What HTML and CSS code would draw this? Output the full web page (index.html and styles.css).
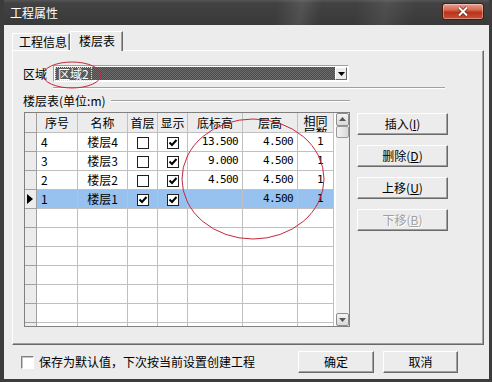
FILE: index.html
```html
<!DOCTYPE html>
<html lang="zh-CN">
<head>
  <meta charset="UTF-8">
  <title>工程属性</title>
  <link rel="stylesheet" href="styles.css">
</head>
<body>

  <div class="window">
    <!-- TITLE BAR -->
    <div class="titlebar">
      <span class="title">工程属性</span>
      <div class="close-btn">
        <svg width="14" height="11" viewBox="0 0 14 11">
          <path d="M3 1.5 L11 9.5 M11 1.5 L3 9.5" stroke="#6a2012" stroke-width="3.4" fill="none"/>
          <path d="M3 1.5 L11 9.5 M11 1.5 L3 9.5" stroke="#fff" stroke-width="2" fill="none"/>
        </svg>
      </div>
    </div>

    <div class="client">
      <!-- TABS -->
      <div class="tabs">
        <div class="tab">工程信息</div>
        <div class="tab active">楼层表</div>
      </div>

      <div class="panel">
        <div class="region-row">
          <span class="region-label">区域</span>
          <div class="combo">
            <div class="combo-value"><span class="combo-text">区域2</span></div>
            <div class="combo-btn">
              <svg width="7" height="4" viewBox="0 0 7 4"><path d="M0 0 H7 L3.5 4 Z" fill="#000"/></svg>
            </div>
          </div>
        </div>
        <div class="etched region-line"></div>

        <div class="group-title">
          <span>楼层表(单位:m)</span>
          <div class="etched group-line"></div>
        </div>

        <div class="grid-area">
          <div class="grid">
            <table class="floor-table">
              <tr class="head">
                <th class="rowhead"></th>
                <th class="c-no">序号</th>
                <th class="c-name">名称</th>
                <th class="c-chk">首层</th>
                <th class="c-chk">显示</th>
                <th class="c-num">底标高</th>
                <th class="c-num">层高</th>
                <th class="c-same"><div class="wrap-head">相同层数</div></th>
              </tr>
              <tr>
                <td class="rowhead"></td>
                <td class="left">4</td>
                <td class="center">楼层4</td>
                <td class="center"><span class="cb"></span></td>
                <td class="center"><span class="cb checked"></span></td>
                <td class="num">13.500</td>
                <td class="num">4.500</td>
                <td class="num same">1</td>
              </tr>
              <tr>
                <td class="rowhead"></td>
                <td class="left">3</td>
                <td class="center">楼层3</td>
                <td class="center"><span class="cb"></span></td>
                <td class="center"><span class="cb checked"></span></td>
                <td class="num">9.000</td>
                <td class="num">4.500</td>
                <td class="num same">1</td>
              </tr>
              <tr>
                <td class="rowhead"></td>
                <td class="left">2</td>
                <td class="center">楼层2</td>
                <td class="center"><span class="cb"></span></td>
                <td class="center"><span class="cb checked"></span></td>
                <td class="num">4.500</td>
                <td class="num">4.500</td>
                <td class="num same">1</td>
              </tr>
              <tr class="selected">
                <td class="rowhead">
                  <svg width="6" height="10" viewBox="0 0 6 10"><path d="M0 0 L6 5 L0 10 Z" fill="#000"/></svg>
                </td>
                <td class="left">1</td>
                <td class="center">楼层1</td>
                <td class="center"><span class="cb checked"></span></td>
                <td class="center"><span class="cb checked"></span></td>
                <td class="num"></td>
                <td class="num">4.500</td>
                <td class="num same">1</td>
              </tr>
              <tr class="empty"><td class="rowhead"></td><td></td><td></td><td></td><td></td><td></td><td></td><td></td></tr>
              <tr class="empty"><td class="rowhead"></td><td></td><td></td><td></td><td></td><td></td><td></td><td></td></tr>
              <tr class="empty"><td class="rowhead"></td><td></td><td></td><td></td><td></td><td></td><td></td><td></td></tr>
              <tr class="empty"><td class="rowhead"></td><td></td><td></td><td></td><td></td><td></td><td></td><td></td></tr>
              <tr class="empty"><td class="rowhead"></td><td></td><td></td><td></td><td></td><td></td><td></td><td></td></tr>
              <tr class="empty"><td class="rowhead"></td><td></td><td></td><td></td><td></td><td></td><td></td><td></td></tr>
              <tr class="empty"><td class="rowhead"></td><td></td><td></td><td></td><td></td><td></td><td></td><td></td></tr>
            </table>
            <div class="gap"></div>
            <div class="vscroll">
              <div class="sb-btn">
                <svg width="7" height="5" viewBox="0 0 7 5"><path d="M0 4 L3.5 0 L7 4 Z" fill="#555"/></svg>
              </div>
              <div class="sb-thumb"></div>
              <div class="sb-track"></div>
              <div class="sb-btn">
                <svg width="7" height="5" viewBox="0 0 7 5"><path d="M0 1 H7 L3.5 5 Z" fill="#555"/></svg>
              </div>
            </div>
          </div>

          <div class="side-buttons">
            <button class="btn side">插入(<u>I</u>)</button>
            <button class="btn side">删除(<u>D</u>)</button>
            <button class="btn side">上移(<u>U</u>)</button>
            <button class="btn side disabled">下移(<u>B</u>)</button>
          </div>
        </div>
      </div>

      <!-- FOOTER -->
      <div class="footer">
        <span class="save-box"></span>
        <span class="save-text">保存为默认值，下次按当前设置创建工程</span>
        <button class="btn ok">确定</button>
        <button class="btn cancel">取消</button>
      </div>
    </div>

    <!-- red annotation marks -->
    <svg class="marks" width="492" height="382" viewBox="0 0 492 382">
      <ellipse cx="72" cy="75" rx="29" ry="13" fill="none" stroke="#c4283c" stroke-width="1"/>
      <ellipse cx="253" cy="179" rx="71" ry="60" fill="none" stroke="#c4283c" stroke-width="1"/>
    </svg>
  </div>

</body>
</html>
```

FILE: styles.css
```css
* {
  box-sizing: border-box;
}

body {
  margin: 0;
  font-family: "Noto Sans CJK SC", "Liberation Sans", sans-serif;
  font-size: 12px;
  line-height: 14px;
  color: #000;
  background-color: #3a3a3a;
}

.window {
  position: relative;
  width: 492px;
  height: 382px;
  background-color: #3f3f3f;
  border-left: 4px solid #3c3c3c;
  border-right: 3px solid #3c3c3c;
  border-bottom: 3px solid #3c3c3c;
  overflow: hidden;
}

.titlebar {
  height: 25px;
  margin-left: -4px;
  margin-right: -3px;
  display: flex;
  background:
    linear-gradient(100deg, transparent 56%, rgba(255,255,255,0.10) 61%, transparent 65%, transparent 72%, rgba(255,255,255,0.08) 78%, transparent 84%),
    linear-gradient(#555555, #424242 3px, #393939);
}

.title {
  color: #fff;
  padding-left: 10px;
  line-height: 25px;
  font-size: 12px;
}

.close-btn {
  margin-left: auto;
  margin-top: 3px;
  margin-right: 8px;
  width: 42px;
  height: 17px;
  border: 1px solid #4a1a10;
  border-radius: 3px;
  background: linear-gradient(#e7a190 0, #d8674d 40%, #b9341a 55%, #c8503a 100%);
  box-shadow: inset 0 0 0 1px rgba(255,255,255,0.35);
  display: flex;
  align-items: center;
  justify-content: center;
}

.client {
  height: 354px;
  background-color: #ececec;
  padding: 6px 0 0 8px;
}

/* TABS */
.tabs {
  height: 19px;
  display: flex;
  align-items: flex-end;
}

.tab {
  position: relative;
  height: 17px;
  width: 58px;
  padding-left: 6px;
  line-height: 16px;
  background-color: #ececec;
  border-top: 1px solid #fff;
  border-left: 1px solid #fff;
  border-right: 1px solid #696969;
  box-shadow: inset -1px 0 #a0a0a0;
}

.tab.active {
  width: 53px;
  height: 20px;
  margin-bottom: -1px;
  padding-left: 8px;
  line-height: 17px;
  z-index: 1;
}

.panel {
  width: 472px;
  height: 295px;
  padding: 14px 0 0 10px;
  border: 1px solid;
  border-color: #fff #696969 #696969 #fff;
  box-shadow: inset -1px -1px #a0a0a0;
}

.region-row {
  display: flex;
  align-items: center;
  height: 17px;
}

.region-label {
  width: 30px;
}

.combo {
  width: 296px;
  height: 17px;
  display: flex;
  padding: 1px;
  border: 1px solid;
  border-color: #a0a0a0 #fff #fff #a0a0a0;
  background-color: #fff;
}

.combo-value {
  flex: 1;
  padding: 0 1px;
  background: repeating-conic-gradient(#4c4c4c 0 25%, #6c6c6c 0 50%) 0 0 / 2px 2px;
  display: flex;
  align-items: center;
}

.combo-text {
  color: #fff;
  padding: 0 2px;
  line-height: 12px;
  outline: 1px dotted #d8d8d8;
}

.combo-btn {
  width: 12px;
  display: flex;
  align-items: center;
  justify-content: center;
  background-color: #ececec;
  border: 1px solid;
  border-color: #fff #696969 #696969 #fff;
}

.etched {
  height: 2px;
  border-top: 1px solid #a0a0a0;
  border-bottom: 1px solid #fff;
}

.region-line {
  margin: 5px 0 0 30px;
  width: 392px;
}

.group-title {
  margin-top: 5px;
  width: 327px;
  display: flex;
  align-items: center;
  height: 14px;
}

.group-line {
  flex: 1;
  margin-left: 5px;
}

.grid-area {
  display: flex;
  margin-top: 4px;
  margin-left: 1px;
}

/* GRID */
.grid {
  width: 326px;
  height: 215px;
  border: 1px solid #808080;
  background-color: #fff;
  display: flex;
  overflow: hidden;
}

.floor-table {
  width: 309px;
  table-layout: fixed;
  border-collapse: separate;
  border-spacing: 0;
  align-self: flex-start;
}

.floor-table th,
.floor-table td {
  height: 19px;
  padding: 0;
  border-right: 1px solid #c0c0c0;
  border-bottom: 1px solid #c0c0c0;
  white-space: nowrap;
  overflow: hidden;
  font-weight: normal;
}

.floor-table tr.head th {
  height: 20px;
  background-color: #ececec;
  text-align: center;
}

.rowhead { width: 12px; }
.c-no { width: 41px; }
.c-name { width: 50px; }
.c-chk { width: 30px; }
.c-num { width: 55px; }
.c-same { width: 36px; }

.floor-table td.rowhead,
.floor-table th.rowhead {
  background-color: #ececec;
  border-right-color: #a0a0a0;
  border-bottom-color: #a0a0a0;
  padding-left: 2px;
}

.rowhead svg {
  display: block;
}

.wrap-head {
  height: 19px;
  padding-top: 2px;
  white-space: normal;
  width: 26px;
  margin: 0 auto;
  line-height: 12px;
  overflow: hidden;
}

.left {
  padding-left: 4px !important;
}

.center {
  text-align: center;
}

.num {
  text-align: right;
  padding-right: 4px !important;
  font-family: "DejaVu Sans Mono", "Liberation Mono", monospace;
  font-size: 11px;
  letter-spacing: -0.6px;
}

.num.same {
  padding-right: 10px !important;
}

.selected td:not(.rowhead) {
  background-color: #97c1ee;
}

.cb {
  display: inline-block;
  vertical-align: middle;
  width: 12px;
  height: 12px;
  border: 1px solid #1e1e1e;
  background-color: #fff;
}

.cb.checked {
  background: #fff url("data:image/svg+xml,%3Csvg xmlns='http://www.w3.org/2000/svg' width='10' height='10'%3E%3Cpath d='M1.5 4.5 L4 7 L8.5 2' stroke='%23000' stroke-width='2' fill='none'/%3E%3C/svg%3E") center / 10px 10px no-repeat;
}

.gap {
  width: 2px;
}

.vscroll {
  width: 13px;
  display: flex;
  flex-direction: column;
  background-color: #f0f0f0;
}

.sb-btn {
  height: 13px;
  border: 1px solid #8e8e8e;
  border-radius: 2px;
  background: linear-gradient(#f4f4f4, #d9d9d9);
  display: flex;
  align-items: center;
  justify-content: center;
}

.sb-thumb {
  height: 12px;
  border: 1px solid #9a9a9a;
  border-radius: 2px;
  background: linear-gradient(90deg, #f2f2f2, #dadada);
}

.sb-track {
  flex: 1;
}

/* BUTTONS */
.btn {
  font-family: "Noto Sans CJK SC", "Liberation Sans", sans-serif;
  font-size: 12px;
  line-height: 14px;
  color: #000;
  height: 22px;
  padding: 0;
  background-color: #ececec;
  border: 1px solid;
  border-color: #fff #696969 #696969 #fff;
  box-shadow: inset -1px -1px #a0a0a0;
}

.side-buttons {
  margin-left: 7px;
  margin-top: 1px;
  display: flex;
  flex-direction: column;
  gap: 10px;
}

.btn.side {
  width: 91px;
}

.btn.disabled {
  color: #a0a0a0;
  text-shadow: 1px 1px #fff;
}

.footer {
  margin-top: 6px;
  padding: 0 31px 0 9px;
  display: flex;
  align-items: center;
  height: 22px;
}

.save-box {
  width: 13px;
  height: 13px;
  border: 1px solid;
  border-color: #808080 #fff #fff #808080;
  box-shadow: inset 1px 1px #c4c4c4;
  background-color: #fff;
  margin-right: 5px;
}

.btn.ok {
  margin-left: auto;
  width: 76px;
}

.btn.cancel {
  margin-left: 9px;
  width: 75px;
}

.marks {
  position: absolute;
  top: 0;
  left: -4px;
  pointer-events: none;
}
```
